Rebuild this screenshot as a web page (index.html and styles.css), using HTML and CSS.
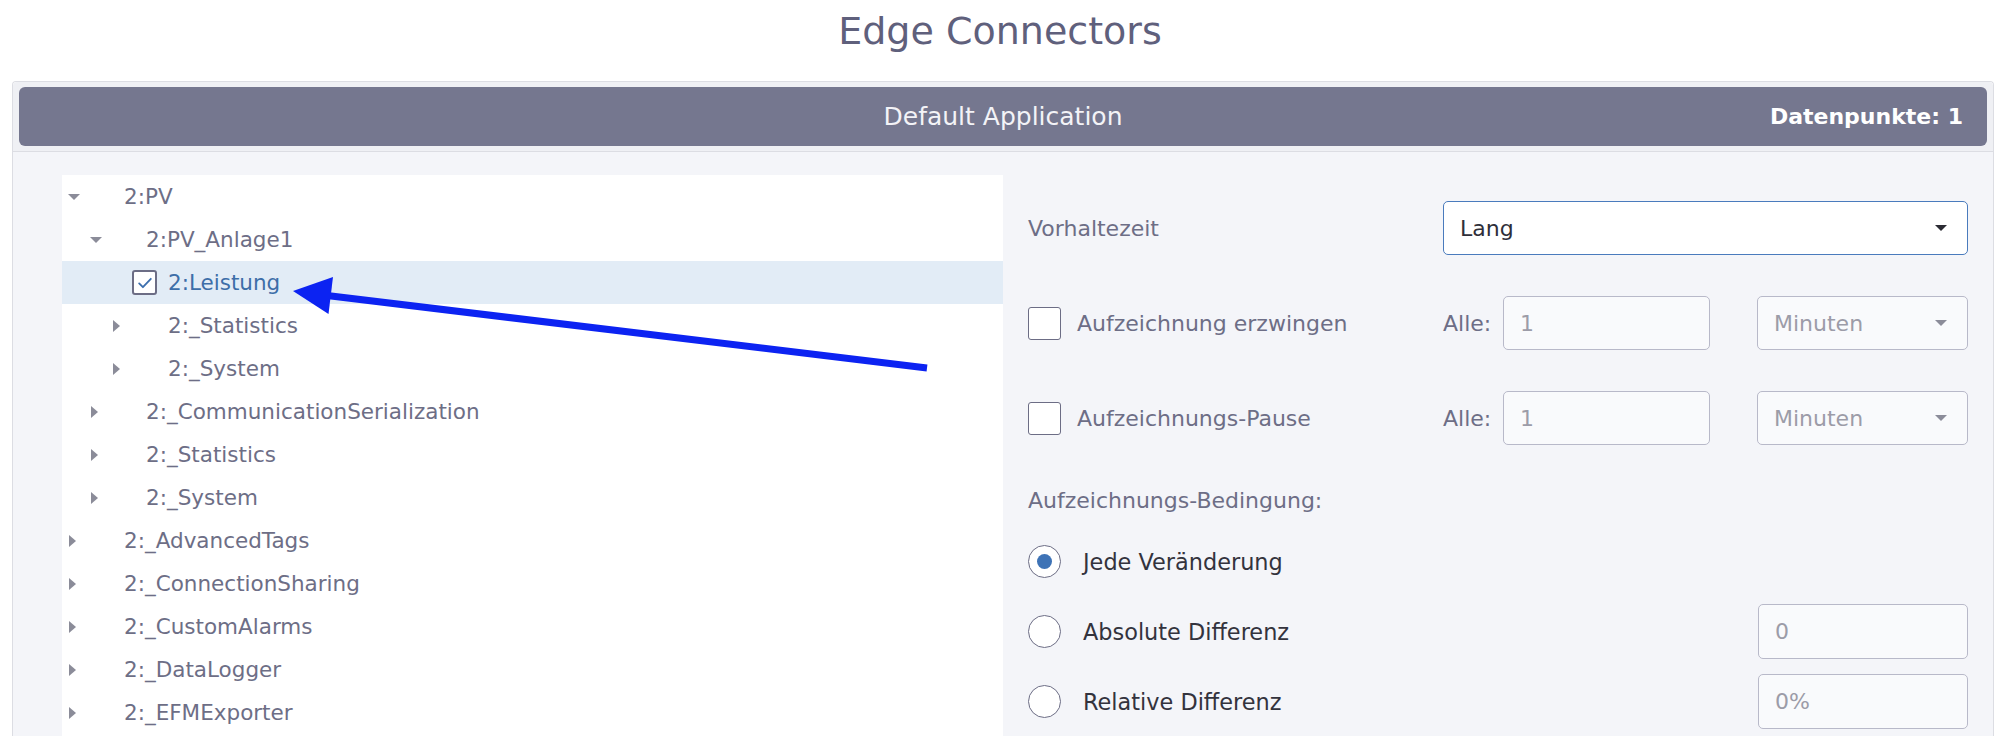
FILE: index.html
```html
<!DOCTYPE html>
<html lang="de">
<head>
<meta charset="utf-8">
<title>Edge Connectors</title>
<link rel="stylesheet" href="styles.css">
</head>
<body>
<h1 class="page-title">Edge Connectors</h1>
<section class="panel">
  <header class="panel-head">
    <div class="app-bar">
      <span class="app-name">Default Application</span>
      <span class="app-count">Datenpunkte: 1</span>
    </div>
  </header>
  <div class="panel-body">
    <ul class="tree">
      <li class="node l0"><span class="caret"><i class="tri-down"></i></span><span class="label">2:PV</span></li>
      <li class="node l1"><span class="caret"><i class="tri-down"></i></span><span class="label">2:PV_Anlage1</span></li>
      <li class="node l2 leaf selected"><span class="caret"></span><span class="tree-check"><svg viewBox="0 0 24 24" width="20" height="20"><path d="M5 12.5l4.5 4.5L19 7" fill="none" stroke="#3c6fae" stroke-width="2.2" stroke-linecap="round" stroke-linejoin="round"/></svg></span><span class="label">2:Leistung</span></li>
      <li class="node l2"><span class="caret"><i class="tri-right"></i></span><span class="label">2:_Statistics</span></li>
      <li class="node l2"><span class="caret"><i class="tri-right"></i></span><span class="label">2:_System</span></li>
      <li class="node l1"><span class="caret"><i class="tri-right"></i></span><span class="label">2:_CommunicationSerialization</span></li>
      <li class="node l1"><span class="caret"><i class="tri-right"></i></span><span class="label">2:_Statistics</span></li>
      <li class="node l1"><span class="caret"><i class="tri-right"></i></span><span class="label">2:_System</span></li>
      <li class="node l0"><span class="caret"><i class="tri-right"></i></span><span class="label">2:_AdvancedTags</span></li>
      <li class="node l0"><span class="caret"><i class="tri-right"></i></span><span class="label">2:_ConnectionSharing</span></li>
      <li class="node l0"><span class="caret"><i class="tri-right"></i></span><span class="label">2:_CustomAlarms</span></li>
      <li class="node l0"><span class="caret"><i class="tri-right"></i></span><span class="label">2:_DataLogger</span></li>
      <li class="node l0"><span class="caret"><i class="tri-right"></i></span><span class="label">2:_EFMExporter</span></li>
    </ul>
    <div class="settings">
      <div class="row">
        <span class="field-label">Vorhaltezeit</span>
        <div class="select active wide"><span>Lang</span><i class="tri-down dark"></i></div>
      </div>
      <div class="row">
        <label class="check-line"><span class="box"></span><span class="field-label">Aufzeichnung erzwingen</span></label>
        <span class="field-label">Alle:</span>
        <div class="input disabled">1</div>
        <div class="select disabled end"><span>Minuten</span><i class="tri-down"></i></div>
      </div>
      <div class="row">
        <label class="check-line"><span class="box"></span><span class="field-label">Aufzeichnungs-Pause</span></label>
        <span class="field-label">Alle:</span>
        <div class="input disabled">1</div>
        <div class="select disabled end"><span>Minuten</span><i class="tri-down"></i></div>
      </div>
      <div class="section-title">Aufzeichnungs-Bedingung:</div>
      <div class="radio-group">
        <div class="radio-row">
          <label class="radio-line"><span class="radio on"></span><span class="radio-label">Jede Veränderung</span></label>
        </div>
        <div class="radio-row">
          <label class="radio-line"><span class="radio"></span><span class="radio-label">Absolute Differenz</span></label>
          <div class="input disabled end">0</div>
        </div>
        <div class="radio-row">
          <label class="radio-line"><span class="radio"></span><span class="radio-label">Relative Differenz</span></label>
          <div class="input disabled end">0%</div>
        </div>
      </div>
    </div>
  </div>
</section>
<svg class="annotation" width="2000" height="736" viewBox="0 0 2000 736">
  <line x1="327" y1="295.5" x2="927" y2="368" stroke="#0c23f2" stroke-width="7"/>
  <polygon points="293,291 333,277 328.5,314" fill="#0c23f2"/>
</svg>
</body>
</html>
```

FILE: styles.css
```css
* { box-sizing: border-box; }

html, body {
  margin: 0;
  padding: 0;
  background: #ffffff;
  font-family: "DejaVu Sans", "Noto Sans", sans-serif;
  overflow: hidden;
}

body { position: relative; height: 736px; }

.page-title {
  margin: 0;
  padding: 9px 0 28px;
  line-height: 44px;
  font-size: 38px;
  font-weight: normal;
  color: #5f607c;
  text-align: center;
}

.panel {
  margin-left: 12px;
  width: 1982px;
  border: 1px solid #dcdde3;
  border-bottom: none;
  border-radius: 4px 4px 0 0;
}

.panel-head {
  background: #eff0f4;
  padding: 5px 6px 5px;
  border-bottom: 1px solid #dcdde3;
  border-radius: 4px 4px 0 0;
}

.app-bar {
  height: 59px;
  background: #75778f;
  border-radius: 6px;
  display: grid;
  grid-template-columns: 1fr auto 1fr;
  align-items: center;
  padding: 0 24px;
  color: #ffffff;
}

.app-name {
  grid-column: 2;
  font-size: 25px;
  color: #f3f3f7;
}

.app-count {
  grid-column: 3;
  justify-self: end;
  font-size: 22px;
  font-weight: bold;
}

.panel-body {
  background: #f4f5f9;
  display: flex;
  padding: 23px 0 0 49px;
  min-height: 620px;
}

/* tree */
.tree {
  list-style: none;
  margin: 0;
  padding: 0;
  width: 941px;
  background: #ffffff;
  flex: none;
}

.node {
  height: 43px;
  display: flex;
  align-items: center;
  font-size: 21.5px;
  color: #6d6e86;
  white-space: nowrap;
}

.node.l0 { padding-left: 6px; }
.node.l1 { padding-left: 28px; }
.node.l2 { padding-left: 50px; }

.node.selected { background: #e2ecf6; }
.node.selected .label { color: #3d6ea8; }

.caret {
  width: 12px;
  height: 12px;
  display: flex;
  align-items: center;
  justify-content: flex-start;
  flex: none;
}

.caret + .label { margin-left: 44px; }

.tri-down {
  display: block;
  width: 0;
  height: 0;
  border-left: 6px solid transparent;
  border-right: 6px solid transparent;
  border-top: 6px solid #8b8c99;
}

.tri-right {
  display: block;
  width: 0;
  height: 0;
  margin-left: 1px;
  border-top: 6px solid transparent;
  border-bottom: 6px solid transparent;
  border-left: 7px solid #8b8c99;
}

.tree-check {
  width: 25px;
  height: 25px;
  margin-left: 8px;
  border: 2px solid #6c6d85;
  border-radius: 3px;
  background: #ffffff;
  display: flex;
  align-items: center;
  justify-content: center;
  flex: none;
}

.tree-check + .label { margin-left: 11px; }

/* settings */
.settings {
  flex: 1;
  padding: 26px 25px 0;
}

.row {
  display: grid;
  grid-template-columns: 415px 60px 207px 1fr;
  align-items: center;
  height: 54px;
  margin-bottom: 41px;
}

.row:nth-of-type(3) { margin-bottom: 0; }

.field-label {
  font-size: 22px;
  color: #6d6e86;
  white-space: nowrap;
}

.check-line {
  display: flex;
  align-items: center;
}

.box {
  width: 33px;
  height: 33px;
  border: 1.5px solid #6c6d85;
  border-radius: 3px;
  background: #ffffff;
  margin-right: 16px;
  flex: none;
}

.select, .input {
  height: 54px;
  border-radius: 5px;
  display: flex;
  align-items: center;
  padding: 0 20px 0 16px;
  font-size: 22px;
}

.select { justify-content: space-between; }

.select.active {
  background: #ffffff;
  border: 1.5px solid #4a7bbd;
  color: #2f2f3a;
}

.select.wide { grid-column: 2 / 5; }

.disabled {
  background: #f9fafc;
  border: 1.5px solid #b8b9c9;
  color: #9c9ca8;
}

.end {
  grid-column: 4;
  justify-self: end;
  width: 211px;
}

.tri-down.dark { border-top-color: #2b2b33; }

.section-title {
  margin-top: 43px;
  line-height: 26px;
  font-size: 22px;
  color: #6d6e86;
  margin-bottom: 20px;
}

.radio-group {
  display: flex;
  flex-direction: column;
  gap: 15px;
}

.radio-row {
  display: grid;
  grid-template-columns: 415px 60px 207px 1fr;
  align-items: center;
  height: 55px;
}

.radio-row .input { height: 55px; width: 210px; }

.radio-line {
  display: flex;
  align-items: center;
  grid-column: 1 / 3;
}

.radio {
  width: 33px;
  height: 33px;
  border: 1.5px solid #6c6d85;
  border-radius: 50%;
  background: #ffffff;
  display: flex;
  align-items: center;
  justify-content: center;
  margin-right: 22px;
  flex: none;
}

.radio.on::after {
  content: "";
  width: 15px;
  height: 15px;
  border-radius: 50%;
  background: #3e73b6;
}

.radio-label {
  font-size: 22.4px;
  color: #33333d;
  white-space: nowrap;
}

.annotation {
  position: absolute;
  left: 0;
  top: 0;
  pointer-events: none;
}
```
